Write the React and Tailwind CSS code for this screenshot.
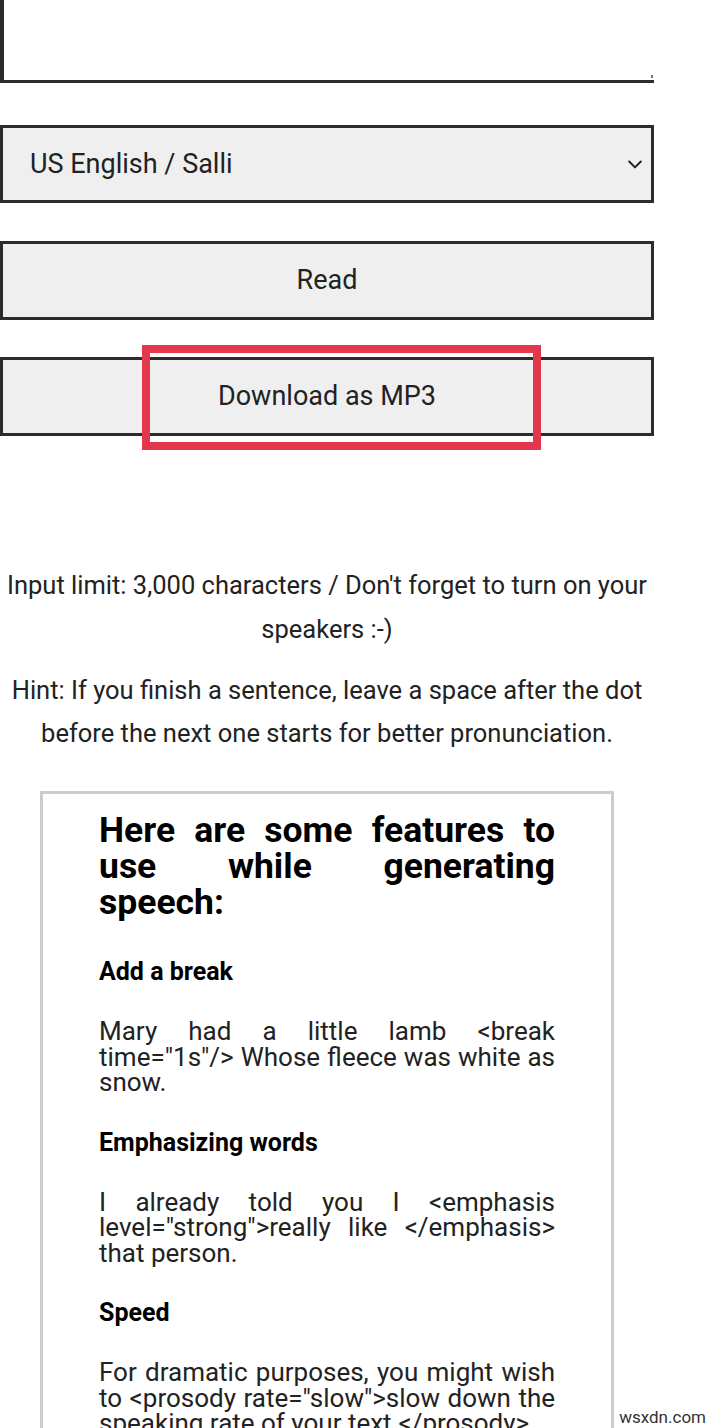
const features = [
  {
    title: 'Add a break',
    text: 'Mary had a little lamb <break time="1s"/> Whose fleece was white as snow.',
  },
  {
    title: 'Emphasizing words',
    text: 'I already told you I <emphasis level="strong">really like </emphasis> that person.',
  },
  {
    title: 'Speed',
    text: 'For dramatic purposes, you might wish to <prosody rate="slow">slow down the speaking rate of your text.</prosody>',
  },
];

const App = () => {
  return (
    <div className="relative h-[1428px] w-[720px] overflow-hidden bg-white font-['Roboto','Liberation_Sans',sans-serif] text-[#222]">
      <div className="w-[654px]">
        {/* textarea, top is scrolled off */}
        <div className="relative h-[83px] border-b-[3px] border-l-[4px] border-[#2b2b2b] bg-white">
          <span className="absolute bottom-[2px] right-[1px] h-[3px] w-[2px] bg-[#777]"></span>
        </div>

        <div className="mt-[42px] flex h-[78px] items-center justify-between border-[3px] border-[#2b2b2b] bg-[#efefef] pl-[27px] pr-[6px]">
          <span className="text-[27px]">US English / Salli</span>
          <svg width="20" height="20" viewBox="0 0 24 24" fill="none" stroke="#222" strokeWidth="2.4" strokeLinecap="round" strokeLinejoin="round">
            <path d="M5 9l7 7 7-7" />
          </svg>
        </div>

        <button className="mt-[38px] flex h-[79px] w-full items-center justify-center border-[3px] border-[#2b2b2b] bg-[#efefef] text-[27px]">
          Read
        </button>

        <div className="relative mt-[37px]">
          <button className="flex h-[79px] w-full items-center justify-center border-[3px] border-[#2b2b2b] bg-[#efefef] text-[27px]">
            Download as MP3
          </button>
          {/* highlight box */}
          <div className="pointer-events-none absolute left-[142px] top-[-12px] h-[105px] w-[399px] border-[8px] border-[#e3384c]"></div>
        </div>

        <p className="mt-[127px] text-center text-[25.5px] leading-[44px]">
          Input limit: 3,000 characters / Don't forget to turn on your speakers :-)
        </p>
        <p className="mt-[18px] text-center text-[25.5px] leading-[43px]">
          Hint: If you finish a sentence, leave a space after the dot before the next one starts for better pronunciation.
        </p>
      </div>

      <div className="ml-[40px] mt-[36px] w-[574px] border-[3px] border-[#cccccc] px-[56px] pt-[18px] pb-[40px]">
        <h2 className="text-justify text-[35.5px] font-bold leading-[36px] text-black">
          Here are some features to use while generating speech:
        </h2>
        {features.map((f, i) => (
          <div key={f.title}>
            <h3 className={`${i === 0 ? 'mt-[39px]' : 'mt-[34px]'} text-[25px] font-bold leading-[26px] text-black`}>
              {f.title}
            </h3>
            <p className="mt-[34px] text-justify text-[26px] leading-[25.5px]">{f.text}</p>
          </div>
        ))}
      </div>

      <span className="absolute bottom-[1px] right-[12px] bg-white px-[2px] text-[17px] leading-[20px] text-[#333]">
        wsxdn.com
      </span>
    </div>
  );
};

export default App;
